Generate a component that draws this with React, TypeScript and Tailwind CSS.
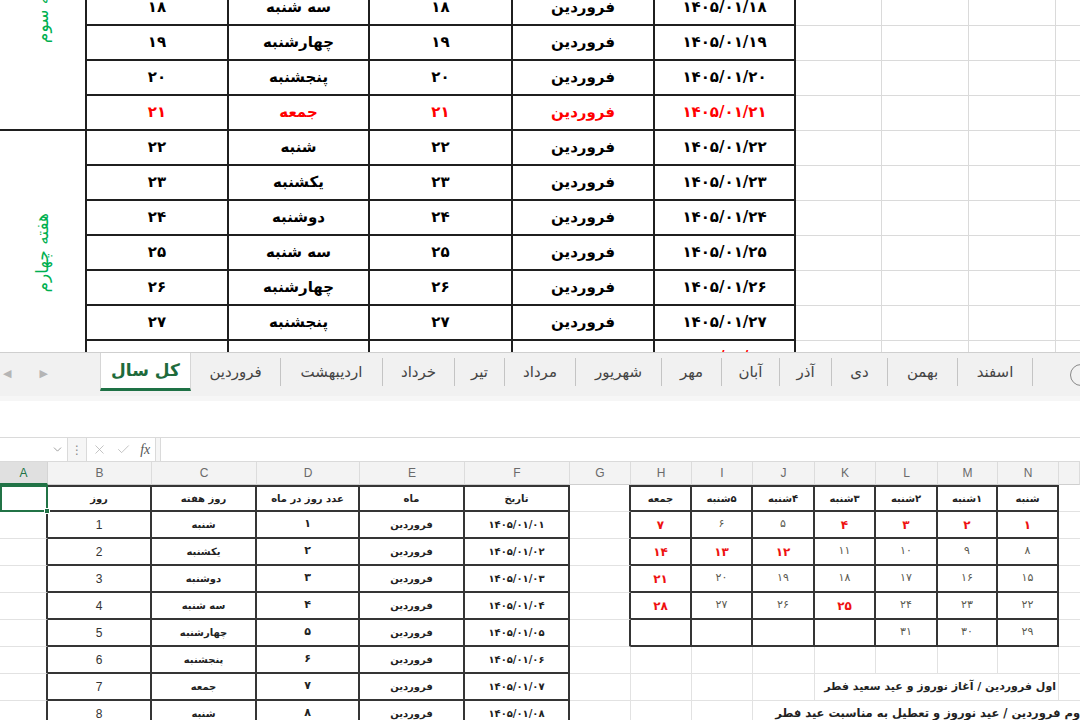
import { Fragment } from 'react';
import { ChevronDown, X, Check } from 'lucide-react';

const fa = (v: number | string) => String(v).replace(/\d/g, (d) => '۰۱۲۳۴۵۶۷۸۹'[Number(d)]);
const weekdays = ['شنبه', 'یکشنبه', 'دوشنبه', 'سه شنبه', 'چهارشنبه', 'پنجشنبه', 'جمعه'];
const dateOf = (d: number) => fa(`1405/01/${String(d).padStart(2, '0')}`);

// sheet tabs after the active one
const sheets: [string, string][] = [
  ['فروردین', 'w-[90px]'],
  ['اردیبهشت', 'w-[102px]'],
  ['خرداد', 'w-[72px]'],
  ['تیر', 'w-[50px]'],
  ['مرداد', 'w-[71px]'],
  ['شهریور', 'w-[86px]'],
  ['مهر', 'w-[60px]'],
  ['آبان', 'w-[58px]'],
  ['آذر', 'w-[52px]'],
  ['دی', 'w-[56px]'],
  ['بهمن', 'w-[70px]'],
  ['اسفند', 'w-[75px]'],
];

const letters = ['A', 'B', 'C', 'D', 'E', 'F', 'G', 'H', 'I', 'J', 'K', 'L', 'M', 'N', ''];

const calHead = ['جمعه', '۵شنبه', '۴شنبه', '۳شنبه', '۲شنبه', '۱شنبه', 'شنبه'];
const calRows: (number | null)[][] = [
  [7, 6, 5, 4, 3, 2, 1],
  [14, 13, 12, 11, 10, 9, 8],
  [21, 20, 19, 18, 17, 16, 15],
  [28, 27, 26, 25, 24, 23, 22],
  [null, null, null, null, 31, 30, 29],
];
const holidays = [1, 2, 3, 4, 7, 12, 13, 14, 21, 25, 28];

type Cell = { key: string; cls: string; content?: React.ReactNode; dir?: 'rtl' | 'ltr' };

function WeekCell({ label }: { label: string }) {
  return (
    <div className="row-span-7 flex items-center justify-center border-r-2 border-b-2 border-[#1f1f1f]">
      <span className="-rotate-90 whitespace-nowrap text-[17px] font-normal text-[#00b050]" dir="rtl">
        {label}
      </span>
    </div>
  );
}

function TopSheet() {
  const days = Array.from({ length: 14 }, (_, i) => i + 15);
  return (
    <div className="h-[352px] overflow-hidden bg-white">
      <div className="mt-[-114px] grid grid-cols-[87px_142px_141px_143px_142px_141px_86px_87px_87px_1fr] auto-rows-[35px] text-[15px] font-bold">
        {days.map((d) => {
          const tone = d % 7 === 0 ? 'text-[#ff0000]' : 'text-black';
          const cell = `flex items-center justify-center border-r-2 border-b-2 border-[#1f1f1f] ${tone}`;
          const grid = 'border-r border-b border-[#dadada]';
          return (
            <Fragment key={d}>
              {d === 15 && <WeekCell label="هفته سوم" />}
              {d === 22 && <WeekCell label="هفته چهارم" />}
              <div className={cell}>{fa(d)}</div>
              <div className={cell} dir="rtl">{weekdays[(d - 1) % 7]}</div>
              <div className={cell}>{fa(d)}</div>
              <div className={cell} dir="rtl">فروردین</div>
              <div className={cell}>{dateOf(d)}</div>
              <div className={grid} />
              <div className={grid} />
              <div className={grid} />
              <div className="border-b border-[#dadada]" />
            </Fragment>
          );
        })}
      </div>
    </div>
  );
}

function TabBar() {
  return (
    <div className="flex h-[44px] border-t border-[#cfcfcf] bg-[#f1f1f1] text-[15px] text-[#444]">
      <div className="flex w-[100px] items-center gap-[28px] pl-[3px] text-[11px] text-[#b5b5b5]">
        <span>◀</span>
        <span>▶</span>
      </div>
      <div className="flex h-[38px] w-[91px] items-center justify-center border-x border-b-[3px] border-x-[#d6d6d6] border-b-[#1e7145] bg-white text-[17px] font-bold text-[#1e6b3c]" dir="rtl">
        کل سال
      </div>
      {sheets.map(([name, w]) => (
        <div key={name} className={`${w} flex h-[38px] items-center`}>
          <span className="flex-1 text-center" dir="rtl">{name}</span>
          <span className="h-[28px] w-px bg-[#c4c4c4]" />
        </div>
      ))}
      <div className="flex flex-1 items-center justify-end">
        <span className="mr-[-12px] h-[22px] w-[22px] rounded-full border border-[#888]" />
      </div>
    </div>
  );
}

function FormulaBar() {
  return (
    <div className="flex h-[25px] items-stretch border-y border-[#dadada] bg-[#f6f6f6] text-[#8a8a8a]">
      <div className="flex w-[68px] items-center justify-end border-r border-[#dadada] bg-white pr-[3px]">
        <ChevronDown size={13} strokeWidth={1.5} />
      </div>
      <div className="flex w-[18px] items-center justify-center text-[12px]">⋮</div>
      <div className="flex w-[70px] items-center justify-around border-x border-[#dadada] bg-white text-[#b0b0b0]">
        <X size={15} strokeWidth={1.2} />
        <Check size={15} strokeWidth={1.2} />
        <span className="font-['Liberation_Serif',serif] text-[14px] italic text-[#555]">fx</span>
      </div>
      <div className="ml-[4px] flex-1 border-l border-[#dadada] bg-white" />
    </div>
  );
}

function BottomSheet() {
  const g = 'border-r border-b border-[#e2e2e2]';
  const dark = 'border-r-2 border-b-2 border-[#353535]';
  const rows: Cell[][] = [];

  for (let r = 0; r < 9; r++) {
    const row: Cell[] = [];
    const top = r === 0 ? ' border-t-2' : '';
    // column A
    row.push({
      key: 'A',
      cls:
        r === 0
          ? 'relative border-2 border-[#217346]'
          : 'border-b border-b-[#e2e2e2] border-r-2 border-r-[#353535]',
    });
    // B..F day list
    if (r === 0) {
      ['روز', 'روز هفته', 'عدد روز در ماه', 'ماه', 'تاریخ'].forEach((t, i) =>
        row.push({ key: 'h' + i, cls: dark + top + ' font-bold text-[10px] text-[#222]', content: t, dir: 'rtl' })
      );
    } else {
      const d = r;
      row.push({ key: 'b', cls: dark + " font-['Liberation_Sans',sans-serif] text-[12px] text-[#333]", content: String(d) });
      row.push({ key: 'c', cls: dark + ' font-bold text-[10px] text-[#222]', content: weekdays[(d - 1) % 7], dir: 'rtl' });
      row.push({ key: 'd', cls: dark + ' font-bold text-[11px] text-[#222]', content: fa(d) });
      row.push({ key: 'e', cls: dark + ' font-bold text-[10px] text-[#222]', content: 'فروردین', dir: 'rtl' });
      row.push({ key: 'f', cls: dark + ' font-bold text-[10px] text-[#222]', content: dateOf(d) });
    }
    // column G
    row.push({
      key: 'G',
      cls: r < 6 ? 'border-b border-b-[#e2e2e2] border-r-2 border-r-[#353535]' : g,
    });
    // H..N calendar, then O
    if (r === 0) {
      calHead.forEach((t, i) =>
        row.push({ key: 'ch' + i, cls: dark + top + ' font-bold text-[10px] text-[#222]', content: t, dir: 'rtl' })
      );
      row.push({ key: 'O', cls: 'border-b border-[#e2e2e2]' });
    } else if (r < 6) {
      calRows[r - 1].forEach((n, i) => {
        const red = n !== null && holidays.includes(n);
        row.push({
          key: 'c' + i,
          cls: dark + (red ? ' font-bold text-[12px] text-[#ee1111]' : ' text-[11px] text-[#5a5a50]'),
          content: n === null ? '' : fa(n),
        });
      });
      row.push({ key: 'O', cls: 'border-b border-[#e2e2e2]' });
    } else if (r === 6) {
      for (let i = 0; i < 7; i++) row.push({ key: 'e' + i, cls: g });
      row.push({ key: 'O', cls: 'border-b border-[#e2e2e2]' });
    } else if (r === 7) {
      for (let i = 0; i < 3; i++) row.push({ key: 'e' + i, cls: g });
      row.push({
        key: 'note1',
        cls: 'col-span-4 !justify-start pr-[2px] border-b border-r border-[#e2e2e2] font-bold text-[11px] text-[#222]',
        content: 'اول فروردین / آغاز نوروز و عید سعید فطر',
        dir: 'rtl',
      });
      row.push({ key: 'O', cls: 'border-b border-[#e2e2e2]' });
    } else {
      for (let i = 0; i < 2; i++) row.push({ key: 'e' + i, cls: g });
      row.push({
        key: 'note2',
        cls: 'col-span-6 !justify-start mr-[-6px] border-b border-[#e2e2e2] font-bold text-[11.5px] text-[#222]',
        content: 'دوم فروردین / عید نوروز و تعطیل به مناسبت عید فطر',
        dir: 'rtl',
      });
    }
    rows.push(row);
  }

  return (
    <div className="grid grid-cols-[48px_104px_105px_103px_105px_105px_61px_61px_61px_62px_61px_62px_60px_61px_1fr] grid-rows-[23px_repeat(9,27px)]">
      {letters.map((l) => (
        <div
          key={'col' + l}
          className={
            l === 'A'
              ? "flex items-center justify-center border-r border-b-2 border-r-[#d4d4d4] border-b-[#217346] bg-[#e0e0e0] font-['Liberation_Sans',sans-serif] text-[12px] text-[#217346]"
              : "flex items-center justify-center border-r border-b border-r-[#dcdcdc] border-b-[#cfcfcf] bg-[#f3f3f3] font-['Liberation_Sans',sans-serif] text-[12px] text-[#6a6a6a]"
          }
        >
          {l}
        </div>
      ))}
      {rows.map((row, r) =>
        row.map((c) => (
          <div key={r + c.key} className={`flex items-center justify-center whitespace-nowrap ${c.cls}`} dir={c.dir}>
            {c.content}
            {c.key === 'A' && r === 0 && (
              <span className="absolute right-[-4px] bottom-[-4px] h-[6px] w-[6px] border border-white bg-[#217346]" />
            )}
          </div>
        ))
      )}
    </div>
  );
}

export default function App() {
  return (
    <div className="h-[720px] w-[1080px] overflow-hidden bg-white font-['DejaVu_Sans',sans-serif]">
      <TopSheet />
      <TabBar />
      <div className="h-[5px] bg-[#f6f6f6]" />
      <div className="h-[36px] bg-white" />
      <FormulaBar />
      <BottomSheet />
    </div>
  );
}
